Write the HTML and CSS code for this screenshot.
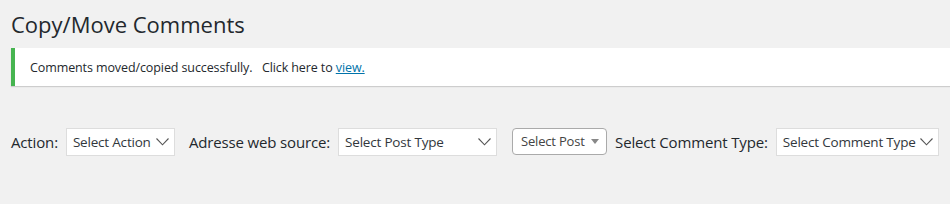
FILE: index.html
```html
<!DOCTYPE html>
<html lang="en">

<head>
    <meta charset="UTF-8">
    <meta name="viewport" content="width=device-width, initial-scale=1.0">
    <title>Copy/Move Comments</title>
    <link rel="stylesheet" href="styles.css">
</head>

<body>
    <div class="wrap">
        <h1>Copy/Move Comments</h1>

        <div class="notice">
            <p>Comments moved/copied successfully. &nbsp; Click here to <a href="#">view.</a></p>
        </div>

        <div class="form-row">
            <div class="field">
                <label>Action:</label>
                <div class="select select-action">
                    <span>Select Action</span>
                    <svg class="chevron" width="13" height="8" viewBox="0 0 13 8"><path d="M0.5 0.5 L6.5 6.8 L12.5 0.5" fill="none" stroke="#555" stroke-width="1.1"/></svg>
                </div>
            </div>
            <div class="field">
                <label>Adresse web source:</label>
                <div class="select select-posttype">
                    <span>Select Post Type</span>
                    <svg class="chevron" width="13" height="8" viewBox="0 0 13 8"><path d="M0.5 0.5 L6.5 6.8 L12.5 0.5" fill="none" stroke="#555" stroke-width="1.1"/></svg>
                </div>
            </div>
            <div class="field field-post">
                <div class="select2">
                    <span>Select Post</span>
                    <svg class="arrow" width="8" height="5" viewBox="0 0 8 5"><path d="M0 0 L8 0 L4 5 Z" fill="#888"/></svg>
                </div>
            </div>
            <div class="field">
                <label>Select Comment Type:</label>
                <div class="select select-comment">
                    <span>Select Comment Type</span>
                    <svg class="chevron" width="13" height="8" viewBox="0 0 13 8"><path d="M0.5 0.5 L6.5 6.8 L12.5 0.5" fill="none" stroke="#555" stroke-width="1.1"/></svg>
                </div>
            </div>
        </div>
    </div>
</body>

</html>
```

FILE: styles.css
```css
body {
    margin: 0;
    padding: 0;
    background-color: #f1f1f1;
    font-family: 'Open Sans', sans-serif;
    color: #23282d;
    overflow: hidden;
}

.wrap {
    padding: 0 0 0 11px;
}

h1 {
    margin: 0;
    padding: 9px 0 0 0;
    font-size: 22px;
    font-weight: 400;
    line-height: 30px;
    letter-spacing: 0;
}

.notice {
    margin-top: 9px;
    background: #fff;
    border-left: 4px solid #46b450;
    box-shadow: 0 1px 1px rgba(0, 0, 0, 0.15);
    height: 38px;
    display: flex;
    align-items: center;
}

.notice p {
    margin: 0 0 0 15px;
    font-size: 12.5px;
    letter-spacing: -0.1px;
}

.notice a {
    color: #0073aa;
    text-decoration: underline;
}

.form-row {
    margin-top: 42px;
    display: flex;
    align-items: center;
    white-space: nowrap;
}

.field {
    display: flex;
    align-items: center;
    flex-shrink: 0;
    gap: 8px;
    margin-right: 14px;
}

.field-post {
    margin-left: 1px;
    margin-right: 8px;
}

.field label {
    font-size: 15px;
    letter-spacing: -0.15px;
}

.select {
    box-sizing: border-box;
    height: 28px;
    background: #fff;
    border: 1px solid #ddd;
    display: flex;
    align-items: center;
    justify-content: space-between;
    padding: 0 5px 0 6px;
    font-size: 13.5px;
    letter-spacing: -0.2px;
    color: #32373c;
}

.select-action {
    width: 109px;
}

.select-posttype {
    width: 159px;
}

.select-comment {
    width: 163px;
}

.select2 {
    box-sizing: border-box;
    height: 27px;
    width: 95px;
    margin-top: -2px;
    background: #fff;
    border: 1px solid #aaa;
    border-radius: 4px;
    display: flex;
    align-items: center;
    justify-content: space-between;
    padding: 0 7px 0 8px;
    font-size: 13px;
    letter-spacing: -0.2px;
    color: #444;
}
```
